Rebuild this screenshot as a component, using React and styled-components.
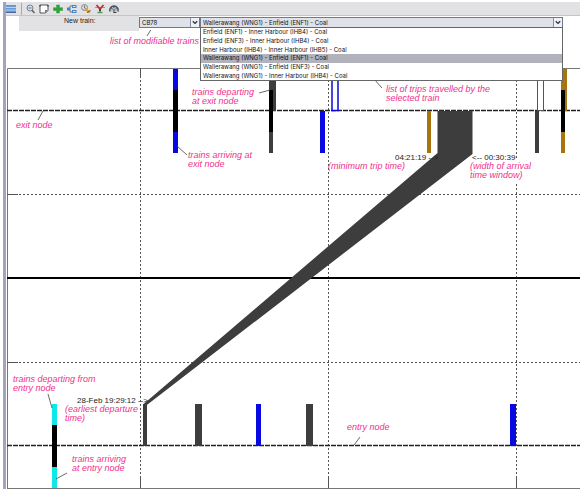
import React from "react";
import styled, { createGlobalStyle } from "styled-components";

const GlobalStyle = createGlobalStyle`
  * { box-sizing: border-box; }
  body { margin: 0; background: #fff; font-family: "Liberation Sans", Arial, sans-serif; }
`;

const DARK = "#3d3d3d";
const BLUE = "#0808e0";
const GOLD = "#a87410";
const CYAN = "#10e8e8";
const PINK = "#f0308c";

const Shell = styled.div`
  padding: 2px 4px 0 3px;
`;

const Frame = styled.main`
  border-left: 3px solid #a3a3bb;
  padding-left: 1px;
`;

const Toolbar = styled.div`
  display: flex;
  align-items: center;
  gap: 4px;
  height: 14px;
  margin-left: -1px;
  background: #e2e2e4;
  border-bottom: 1px solid #c4c4cc;
`;

const ToolButton = styled.button`
  display: flex;
  width: 10px;
  height: 10px;
  padding: 0;
  border: 0;
  background: none;

  svg { width: 10px; height: 10px; }
`;

const Separator = styled.span`
  width: 1px;
  height: 12px;
  margin: 0 -1px 0 1px;
  background: #a8a8b0;
`;

const Controls = styled.div`
  display: flex;
  align-items: flex-start;
  height: 14px;
  padding: 0 17px 0 12px;
`;

const TrainLabel = styled.label`
  flex: 0 0 120px;
  height: 15px;
  padding-left: 45px;
  background: #e2e2e4;
  color: #222;
  font: 7px/9px "Liberation Sans", Arial, sans-serif;
`;

const Combo = styled.div`
  position: relative;
  display: flex;
  flex: ${(p) => (p.$grow ? "1 1 0" : "0 0 61px")};
  min-width: 0;
  height: 11px;
  margin-top: 1px;
  border: 1px solid #70788a;
  background: #e0e2ea;

  > svg {
    position: absolute;
    right: 0;
    top: 0;
    width: 9px;
    height: 9px;
    background: #eef1f8;
    border-left: 1px solid #8890a4;
    pointer-events: none;
  }
`;

const Select = styled.select`
  width: 100%;
  padding: 0 10px 0 2px;
  border: 0;
  border-radius: 0;
  appearance: none;
  background: transparent;
  color: #111;
  font: 6px/9px Inter, "Liberation Sans", sans-serif;
`;

const Menu = styled.ul`
  position: absolute;
  z-index: 2;
  top: 9px;
  left: -1px;
  right: -1px;
  display: grid;
  grid-auto-rows: 1fr;
  height: 54px;
  margin: 0;
  padding: 0;
  list-style: none;
  background: #fff;
  border: 1px solid #666;
`;

const MenuItem = styled.li`
  display: flex;
  align-items: center;
  padding-left: 2px;
  background: ${(p) => (p.$selected ? "#b2b2bc" : "#fff")};
  color: #111;
  font: 6px/8px Inter, "Liberation Sans", sans-serif;
  white-space: nowrap;
`;

const Chart = styled.svg`
  display: block;
  width: 100%;
  height: auto;
`;

const Note = styled.text`
  fill: ${PINK};
  font: italic 9px "Liberation Sans", Arial, sans-serif;
`;

const Time = styled.text`
  fill: #222;
  font: 8px "Liberation Sans", Arial, sans-serif;
`;

const trips = [
  "Enfield (ENF1) - Inner Harbour (IHB4) - Coal",
  "Enfield (ENF3) - Inner Harbour (IHB4) - Coal",
  "Inner Harbour (IHB4) - Inner Harbour (IHB5) - Coal",
  "Wallerawang (WNG1) - Enfield (ENF1) - Coal",
  "Wallerawang (WNG1) - Enfield (ENF3) - Coal",
  "Wallerawang (WNG1) - Inner Harbour (IHB4) - Coal",
];
const currentTrip = trips[3];

const tools = [
  { name: "Zoom", art: <><circle cx="5" cy="4" r="3" fill="#cfe4ee" stroke="#76808c" /><path d="M3.4 4h3.2" stroke="#5c7c98" /><path d="M7 6.2 9.5 9" stroke="#665c58" strokeWidth="1.5" /></> },
  { name: "Page", art: <><path d="M1 1h8v5.5L6.5 9H1z" fill="#fff" stroke="#555" /><path d="M9 6H6v3z" fill="#777" /><path d="M1 1v1.5M9 1v1.5" stroke="#222" /></> },
  { name: "Add", art: <path d="M3.6 1h2.8v2.7H9.5v2.8H6.4V9H3.6V6.500H.5V3.700h3.100z" fill="#28a838" stroke="#188028" strokeWidth=".4" /> },
  { name: "Tree", art: <><path d="M0 5h3M3 2v6M3 2h2M3 8h2" stroke="#777" fill="none" /><path d="M0 3.500h3v3H0zM5 1h4.500v3H5zM5 6h4.500v3H5z" fill="#3e86d0" /><path d="M6 2.500h2.500M6 7.500h2.500" stroke="#cfe6fa" /></> },
  { name: "Schedule", art: <><circle cx="3.500" cy="3.500" r="3" fill="#d7dbe2" stroke="#777" strokeWidth=".8" /><path d="M3.500 1.500v2.300l1.500.8" stroke="#444" fill="none" strokeWidth=".7" /><path d="m3 5.500 2-1.500 4.500 3.500L8 9.500z" fill="#dea43c" /><path d="m6 8.500 3.500-2" stroke="#5c5048" /></> },
  { name: "Filter", art: <><path d="M0 3.500h10" stroke="#999" /><path d="M1.500 1 5 5.200 8.500 1" stroke="#b83838" strokeWidth="1.800" fill="none" /><path d="M5 5v2.500" stroke="#444" strokeWidth="2" /><path d="M2.500 8.500h5" stroke="#50a050" strokeWidth="1.500" /></> },
  { name: "Gauge", art: <><path d="M1 7.500a4.200 4.200 0 1 1 8 0" fill="#b8bec8" stroke="#444c58" strokeWidth="1.300" /><path d="M5 2v2M2.200 4l1.500 1M7.800 4 6.500 5M5 5v4" stroke="#3c424c" strokeWidth=".9" /><path d="M4.500 8.500h3" stroke="#444" /></> },
];

const bars = [
  [173, 69, 5, 84, BLUE], [173, 90, 5, 42, "#000"],
  [269, 69, 7, 42, DARK], [269, 90, 4, 42, "#000"], [269, 132, 4, 21, DARK],
  [320, 111, 5, 42, BLUE], [427, 111, 4, 42, GOLD], [535, 111, 4, 42, DARK],
  [561, 69, 6, 42, GOLD], [561, 90, 4, 42, "#000"], [561, 132, 4, 21, GOLD],
  [52, 404, 5, 84, CYAN], [52, 425, 5, 42, "#000"],
  [143, 404, 4, 42, DARK], [195, 404, 7, 42, DARK], [256, 404, 5, 42, BLUE],
  [306, 404, 7, 42, DARK], [510, 404, 6, 42, BLUE],
];

const leaders = "M152 28l-5 8M43 111l-5 9M177 146l10 9M259 93l11-3M374 79l8 9M48 394l4 14M56 479l11-6M360 437l-6 8";

const notes = [
  [110, 44, "list of modifiable trains"],
  [16, 128, "exit node"],
  [192, 95, "trains departing"], [192, 104, "at exit node"],
  [188, 158, "trains arriving at"], [188, 167, "exit node"],
  [386, 92, "list of trips travelled by the"], [386, 101, "selected train"],
  [328, 169, "(minimum trip time)"],
  [470, 169, "(width of arrival"], [470, 178, "time window)"],
  [13, 382, "trains departing from"], [13, 391, "entry node"],
  [65, 412, "(earliest departure"], [65, 421, "time)"],
  [72, 462, "trains arriving"], [72, 471, "at entry node"],
  [347, 430, "entry node"],
];

const times = [
  [395, 160, "04:21:19 -->"], [472, 160, "<-- 00:30:39"], [77, 403, "28-Feb 19:29:12 -->"],
];

function Arrow() {
  return (
    <svg viewBox="0 0 9 9" aria-hidden="true">
      <path d="M2 3l2.500 2.500L7 3" fill="none" stroke="#333" strokeWidth="1.500" />
    </svg>
  );
}

function TrainGraph() {
  return (
    <Chart viewBox="7 30 573 459" preserveAspectRatio="xMinYMin meet" role="img" aria-label="Train path graph">
      <g fill="none" stroke="#555">
        <path d="M7.500 488.500V68.500H580M7 488.500h573" stroke="#777" />
        <path d="M140.500 68v420M328.500 68v420M516.500 68v90M516.500 184v304M7 194.500h573M7 362.500h573" strokeDasharray="2 2" />
        <path d="M140.500 68v10M140.500 478v10M328.500 478v10M516.500 478v10M7 194.500h11M7 362.500h11" />
        <path d="M7 110.500h573M7 445.500h573" stroke="#222" strokeWidth="1.300" strokeDasharray="5 1" />
        <path d="M7 278h573" stroke="#000" strokeWidth="2" />
      </g>
      <path d="M437.500 111h35v43L147.500 404.500h-4.500L437.500 153z" fill={DARK} />
      {bars.map(([x, y, w, h, c], i) => (
        <rect key={i} x={x + 0.5} y={y + 0.5} width={w - 1} height={h - 1} fill={c} stroke={c} />
      ))}
      <path d="M332 69v41.500h6V69z" fill="#fff" stroke={BLUE} strokeWidth="1.500" />
      <path d="M537.500 69v41.500h6V69z" fill="#fff" stroke="#555" />
      <path d={leaders} stroke="#444" fill="none" strokeWidth=".8" />
      {notes.map(([x, y, t]) => <Note key={`${x}-${y}`} x={x} y={y}>{t}</Note>)}
      {times.map(([x, y, t]) => <Time key={t} x={x} y={y}>{t}</Time>)}
    </Chart>
  );
}

export default function App() {
  return (
    <Shell>
      <GlobalStyle />
      <Frame>
        <Toolbar role="toolbar">
          <ToolButton aria-label="List">
            <svg viewBox="0 0 10 10"><path d="M0 1h10v8H0z" fill="#6798d2" /><path d="M0 3.500h10M0 6h10" stroke="#b9d5f2" /><path d="M0 8.500h10" stroke="#48699c" /></svg>
          </ToolButton>
          <Separator />
          {tools.map((t) => (
            <ToolButton key={t.name} aria-label={t.name}>
              <svg viewBox="0 0 10 10" fill="none">{t.art}</svg>
            </ToolButton>
          ))}
        </Toolbar>
        <Controls>
          <TrainLabel htmlFor="train">New train:</TrainLabel>
          <Combo>
            <Select id="train" defaultValue="CB78"><option>CB78</option></Select>
            <Arrow />
          </Combo>
          <Combo $grow>
            <Select aria-label="Trip" defaultValue={currentTrip}>
              {trips.map((t) => <option key={t}>{t}</option>)}
            </Select>
            <Arrow />
            <Menu role="listbox" aria-label="Trips">
              {trips.map((t) => (
                <MenuItem key={t} role="option" aria-selected={t === currentTrip} $selected={t === currentTrip}>{t}</MenuItem>
              ))}
            </Menu>
          </Combo>
        </Controls>
        <TrainGraph />
      </Frame>
    </Shell>
  );
}
